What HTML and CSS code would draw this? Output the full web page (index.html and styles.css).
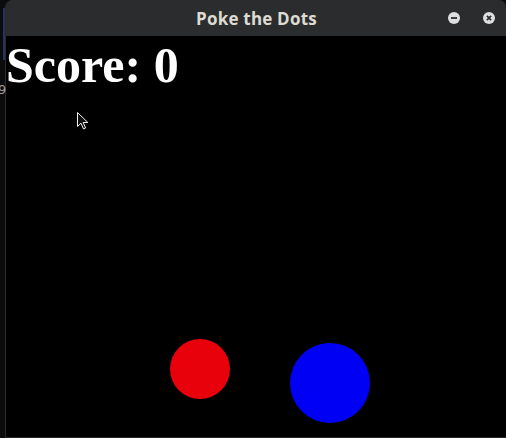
FILE: index.html
```html
<!DOCTYPE html>
<html>
<head>
<meta charset="utf-8">
<title>Poke the Dots</title>
<link rel="stylesheet" href="styles.css">
</head>
<body>
<div class="desktop">
  <aside class="strip">
    <div class="strip-line"></div>
    <span class="strip-glyph">9</span>
  </aside>
  <div class="window">
    <header class="titlebar">
      <span class="title">Poke the Dots</span>
      <div class="controls">
        <span class="ctl">
          <svg width="12" height="12" viewBox="0 0 12 12"><circle cx="6" cy="6" r="6" fill="#dedede"/><rect x="3" y="5.1" width="6" height="1.8" fill="#2b2c2e"/></svg>
        </span>
        <span class="ctl">
          <svg width="12" height="12" viewBox="0 0 12 12"><circle cx="6" cy="6" r="6" fill="#dedede"/><path d="M3.9 3.9 L8.1 8.1 M8.1 3.9 L3.9 8.1" stroke="#2b2c2e" stroke-width="1.7"/></svg>
        </span>
      </div>
    </header>
    <main class="canvas">
      <div class="score">Score: 0</div>
      <div class="dot dot-red"></div>
      <div class="dot dot-blue"></div>
      <svg class="cursor" width="12" height="18" viewBox="0 0 12 18"><path d="M0.5 0.5 L0.5 14.5 L4 11.2 L6.5 17 L8.6 16 L6.2 10.5 L10.8 10.5 Z" fill="#111" stroke="#eee" stroke-width="1"/></svg>
    </main>
  </div>
</div>
</body>
</html>
```
FILE: styles.css
```css
html, body {
  margin: 0;
  padding: 0;
  background: #0b0b0c;
  width: 506px;
  height: 438px;
  overflow: hidden;
}
.desktop {
  display: flex;
  width: 506px;
  height: 438px;
}
.strip {
  position: relative;
  width: 5px;
  flex: none;
  background: #0c0c0e;
}
.strip-line {
  margin: 8px 0 0 3px;
  width: 2px;
  height: 52px;
  background: #27325e;
}
.strip-glyph {
  position: absolute;
  left: -2px;
  top: 82px;
  font: 13px "DejaVu Sans", sans-serif;
  color: #9a9a9a;
}
.window {
  flex: 1;
  display: flex;
  flex-direction: column;
  border-left: 1px solid #2a2a2b;
  border-bottom: 1px solid #2a2a2b;
  border-top-left-radius: 7px;
  border-top-right-radius: 7px;
  overflow: hidden;
}
.titlebar {
  position: relative;
  height: 36px;
  flex: none;
  background: #2b2c2e;
  display: flex;
  align-items: center;
  justify-content: center;
}
.title {
  font: bold 17px "Open Sans", "DejaVu Sans", sans-serif;
  color: #dedbd3;
  letter-spacing: 0.2px;
  margin-left: 1px;
  margin-top: 0;
}
.controls {
  position: absolute;
  right: 11px;
  top: 12px;
  display: flex;
  gap: 23px;
}
.ctl {
  display: block;
  width: 12px;
  height: 12px;
}
.ctl svg { display: block; }
.canvas {
  position: relative;
  flex: 1;
  background: #000;
}
.score {
  font: bold 50px "Liberation Serif", "Times New Roman", serif;
  line-height: 50px;
  color: #fff;
  padding: 4px 0 0 0;
}
.dot {
  position: absolute;
  border-radius: 50%;
}
.dot-red {
  left: 164px;
  top: 303px;
  width: 60px;
  height: 60px;
  background: #e8000b;
}
.dot-blue {
  left: 284px;
  top: 307px;
  width: 80px;
  height: 80px;
  background: #0000f5;
}
.cursor {
  position: absolute;
  left: 71px;
  top: 76px;
}
```
